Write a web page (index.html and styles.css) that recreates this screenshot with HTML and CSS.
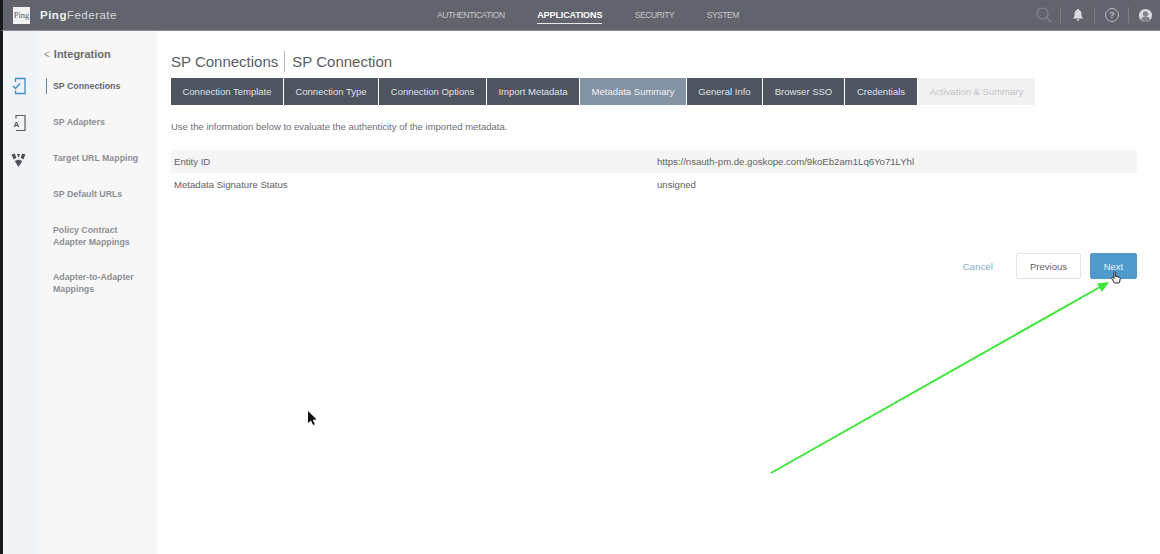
FILE: index.html
```html
<!DOCTYPE html>
<html lang="en">
<head>
<meta charset="utf-8">
<title>PingFederate</title>
<link rel="stylesheet" href="styles.css">
</head>
<body>
<div class="app">
  <header class="topbar">
    <div class="brand">
      <span class="logo">Ping</span>
      <span class="brand-name"><b>Ping</b>Federate</span>
    </div>
    <nav class="topnav">
      <a class="topnav-item">AUTHENTICATION</a>
      <a class="topnav-item is-active">APPLICATIONS</a>
      <a class="topnav-item">SECURITY</a>
      <a class="topnav-item">SYSTEM</a>
    </nav>
    <div class="tools">
      <span class="tool tool-search">
        <svg width="18" height="18" viewBox="0 0 18 18"><circle cx="7.5" cy="7.5" r="5.5" fill="none" stroke="#858891" stroke-width="1.2"/><path d="M11.5 11.5 16 16" stroke="#858891" stroke-width="1.2"/></svg>
      </span>
      <span class="tool">
        <svg width="12" height="14" viewBox="0 0 14 16"><path d="M7 1c.8 0 1.2.5 1.3 1.100C10.300 2.700 11 4.500 11 6.500c0 2.500.6 4 2 5.500H1c1.400-1.500 2-3 2-5.500 0-2 .7-3.800 2.700-4.400C5.800 1.500 6.200 1 7 1zM5.500 13h3c0 1-.7 2-1.500 2s-1.500-1-1.500-2z" fill="#d9dadd"/></svg>
      </span>
      <span class="tool">
        <svg width="16" height="16" viewBox="0 0 16 16"><circle cx="8" cy="8" r="6.500" fill="none" stroke="#b9bbc0" stroke-width="1"/><text x="8" y="11" text-anchor="middle" class="help-mark">?</text></svg>
      </span>
      <span class="tool tool-user">
        <svg width="15" height="15" viewBox="0 0 16 16"><circle cx="8" cy="8" r="7" fill="#d9dadd"/><circle cx="8" cy="6.300" r="2.800" fill="#83858d"/><path d="M3 13c.6-3 2.500-4 5-4s4.400 1 5 4a7 7 0 0 1-10 0z" fill="#83858d"/></svg>
      </span>
    </div>
  </header>
  <div class="body">
    <aside class="rail">
      <span class="rail-icon">
        <svg width="14" height="18" viewBox="0 0 14 18"><path d="M3.500 5V1.500h9.500v15H3.500V13.500" fill="none" stroke="#3f8fc4" stroke-width="1.300"/><path d="M1 9l2.500 2.500L8 6.500" fill="none" stroke="#3f8fc4" stroke-width="1.400"/></svg>
      </span>
      <span class="rail-icon">
        <svg width="14" height="18" viewBox="0 0 14 18"><path d="M4 4.500v-3h9v15H4" fill="none" stroke="#5b5e66" stroke-width="1.200"/><text x="4.500" y="13" text-anchor="middle" class="rail-letter">A</text></svg>
      </span>
      <span class="rail-icon">
        <svg width="15" height="15" viewBox="0 0 14 14"><path d="M.5 1.500 3.500.5l1.500 4-2.500 1.500zM13.500 1.500 10.500.5 9 4.500l2.500 1.500zM5.500 1h3L7 4.500zM3.500 7.500 7 6l3.500 1.500L7 13z" fill="#4e5159"/></svg>
      </span>
    </aside>
    <aside class="sidebar">
      <div class="side-title"><span class="chev">&lt;</span>Integration</div>
      <ul class="side-list">
        <li class="side-item is-current">SP Connections</li>
        <li class="side-item">SP Adapters</li>
        <li class="side-item">Target URL Mapping</li>
        <li class="side-item">SP Default URLs</li>
        <li class="side-item">Policy Contract<br>Adapter Mappings</li>
        <li class="side-item">Adapter-to-Adapter<br>Mappings</li>
      </ul>
    </aside>
    <main class="main">
      <h1 class="crumbs"><span class="crumb-first">SP Connections</span><span>SP Connection</span></h1>
      <div class="tabs">
        <span class="tab w1">Connection Template</span>
        <span class="tab w2">Connection Type</span>
        <span class="tab w3">Connection Options</span>
        <span class="tab w4">Import Metadata</span>
        <span class="tab w5 is-current">Metadata Summary</span>
        <span class="tab w6">General Info</span>
        <span class="tab w7">Browser SSO</span>
        <span class="tab w8">Credentials</span>
        <span class="tab w9 is-disabled">Activation &amp; Summary</span>
      </div>
      <p class="intro">Use the information below to evaluate the authenticity of the imported metadata.</p>
      <div class="rows">
        <div class="row is-striped"><span class="row-label">Entity ID</span><span>https://nsauth-pm.de.goskope.com/9koEb2am1Lq6Yo71LYhl</span></div>
        <div class="row"><span class="row-label">Metadata Signature Status</span><span>unsigned</span></div>
      </div>
      <div class="actions">
        <a class="cancel">Cancel</a>
        <button class="btn">Previous</button>
        <button class="btn btn-primary">Next</button>
      </div>
    </main>
  </div>
  <svg class="overlay" width="1160" height="554" viewBox="0 0 1160 554">
    <path d="M771 473 1100 287" stroke="#3fe63a" stroke-width="2" fill="none"/>
    <path d="M1109 282 1097 283.500 1102 292z" fill="#3fe63a"/>
    <path d="M308 411v12l3-2.500 2 4.500 1.800-.8-2-4.400 3.800-.3z" fill="#111"/>
    <path d="M1114 272.500c0-1 1.700-1 1.700 0v4l3.500.6c.8.200 1 .6 1 1.400l-.5 3.500c-.1.700-.5 1-1 1h-3.700c-.5 0-.8-.2-1-.6l-2.300-4c-.5-1 .6-1.600 1.300-.9l1 1z" fill="#f4f4f4" stroke="#222" stroke-width="1"/>
  </svg>
</div>
</body>
</html>
```
FILE: styles.css
```css
* { box-sizing: border-box; }
html, body { margin: 0; height: 100%; background: #fff; overflow: hidden; }
body { font-family: "Liberation Sans", Arial, sans-serif; color: #5f6167; }

.app {
  position: relative;
  width: 1160px;
  height: 554px;
  display: flex;
  flex-direction: column;
  filter: blur(0.5px);
}

.topbar {
  height: 31px;
  flex: none;
  background: #62646d;
  border-bottom: 1px solid #8d8f96;
  display: flex;
  align-items: center;
  padding-left: 10px;
  border-left: 3px solid #1a1a1c;
}
.brand { width: 424px; display: flex; align-items: center; gap: 10px; flex: none; }
.logo {
  width: 17px; height: 17px; background: #f2f2f2; color: #5a5c62;
  font: 8.500px/17px "Liberation Serif", serif; text-align: center;
}
.brand-name { color: #d5d6da; font-size: 11.500px; letter-spacing: .5px; }
.brand-name b { color: #f0f0f2; }

.topnav { display: flex; gap: 32.500px; flex: none; width: 560px; }
.topnav-item { color: #c5c6cb; font-size: 8.500px; letter-spacing: -.45px; line-height: 16px; }
.topnav-item.is-active { color: #fff; font-weight: bold; font-size: 9px; border-bottom: 1px solid #e8e8ea; letter-spacing: -.1px; }

.tools { display: flex; align-items: center; margin-left: 35px; height: 20px; }
.tool { width: 34px; height: 16px; display: flex; align-items: center; justify-content: center; border-left: 1px solid #7b7d85; }
.tool-search { border-left: 0; width: 28px; padding-right: 4px; }
.help-mark { font: bold 9px "Liberation Sans", sans-serif; fill: #b9bbc0; }

.body { flex: 1; display: flex; min-height: 0; }

.rail {
  width: 36px; flex: none;
  background: #f0f4f7;
  border-left: 3px solid #1a1a1c;
  display: flex; flex-direction: column; align-items: center;
  padding: 46px 0 0 0;
  gap: 19px;
}
.rail-icon { display: flex; align-items: center; justify-content: center; height: 18px; margin-right: 2px; }
.rail-letter { font: bold 8px "Liberation Sans", sans-serif; fill: #4e5159; }

.sidebar { width: 121px; flex: none; background: #f7f7f8; padding-top: 16px; }
.side-title { font-size: 11px; font-weight: bold; color: #6a6c72; padding-left: 8px; line-height: 14px; }
.chev { font-weight: normal; color: #8d8f95; margin-right: 4px; font-size: 10px; }
.side-list { list-style: none; margin: 18px 0 0; padding: 0 0 0 17px; }
.side-item {
  font-size: 8.800px; font-weight: bold; color: #8d8f95; line-height: 12px;
  margin-bottom: 23.900px; position: relative;
}
.side-item.is-current { color: #65676d; }
.side-item.is-current::before {
  content: ""; position: absolute; left: -7px; top: -2px; width: 1px; height: 16px; background: #5b87a8;
}

.main { flex: 1; padding: 0 23px 0 14px; min-width: 0; background: #fff; }
.crumbs { margin: 20px 0 0; font-size: 15px; font-weight: normal; color: #5b5d63; line-height: 21px; display: flex; }
.crumb-first { padding-right: 6px; margin-right: 7px; border-right: 1px solid #b5b6ba; }

.tabs { display: flex; margin-top: 6px; height: 27px; }
.tab {
  flex: none; background: #4e5560; color: #dfe1e4; font-size: 9.500px;
  line-height: 27px; text-align: center; margin-right: 1px; white-space: nowrap;
}
.tab.is-current { background: #8594a5; color: #eef0f3; }
.tab.is-disabled { background: #f1f1f2; color: #c2c3c6; margin-right: 0; }
.w1 { width: 112px; } .w2 { width: 94px; } .w3 { width: 107px; } .w4 { width: 92px; }
.w5 { width: 106px; } .w6 { width: 75px; } .w7 { width: 81px; } .w8 { width: 72px; } .w9 { width: 117px; }

.intro { margin: 16px 0 0; font-size: 9.500px; line-height: 12px; color: #6d6f75; }

.rows { margin-top: 17px; }
.row { height: 23px; display: flex; align-items: center; font-size: 9.600px; color: #5f6167; padding-left: 3px; }
.row.is-striped { background: #f5f5f6; }
.row-label { width: 483px; flex: none; }

.actions { display: flex; justify-content: flex-end; align-items: center; margin-top: 57px; }
.cancel { color: #7fb0d0; font-size: 9.800px; margin-right: 23px; }
.btn {
  height: 26px; border-radius: 2px; font: 9.500px "Liberation Sans", sans-serif;
  background: #fff; border: 1px solid #e3e3e5; color: #5f6167; width: 65px; padding: 0;
}
.btn-primary { background: #4f9aca; border-color: #4f9aca; color: #e9f3f9; width: 47px; margin-left: 9px; }

.overlay { position: absolute; left: 0; top: 0; pointer-events: none; }
```
